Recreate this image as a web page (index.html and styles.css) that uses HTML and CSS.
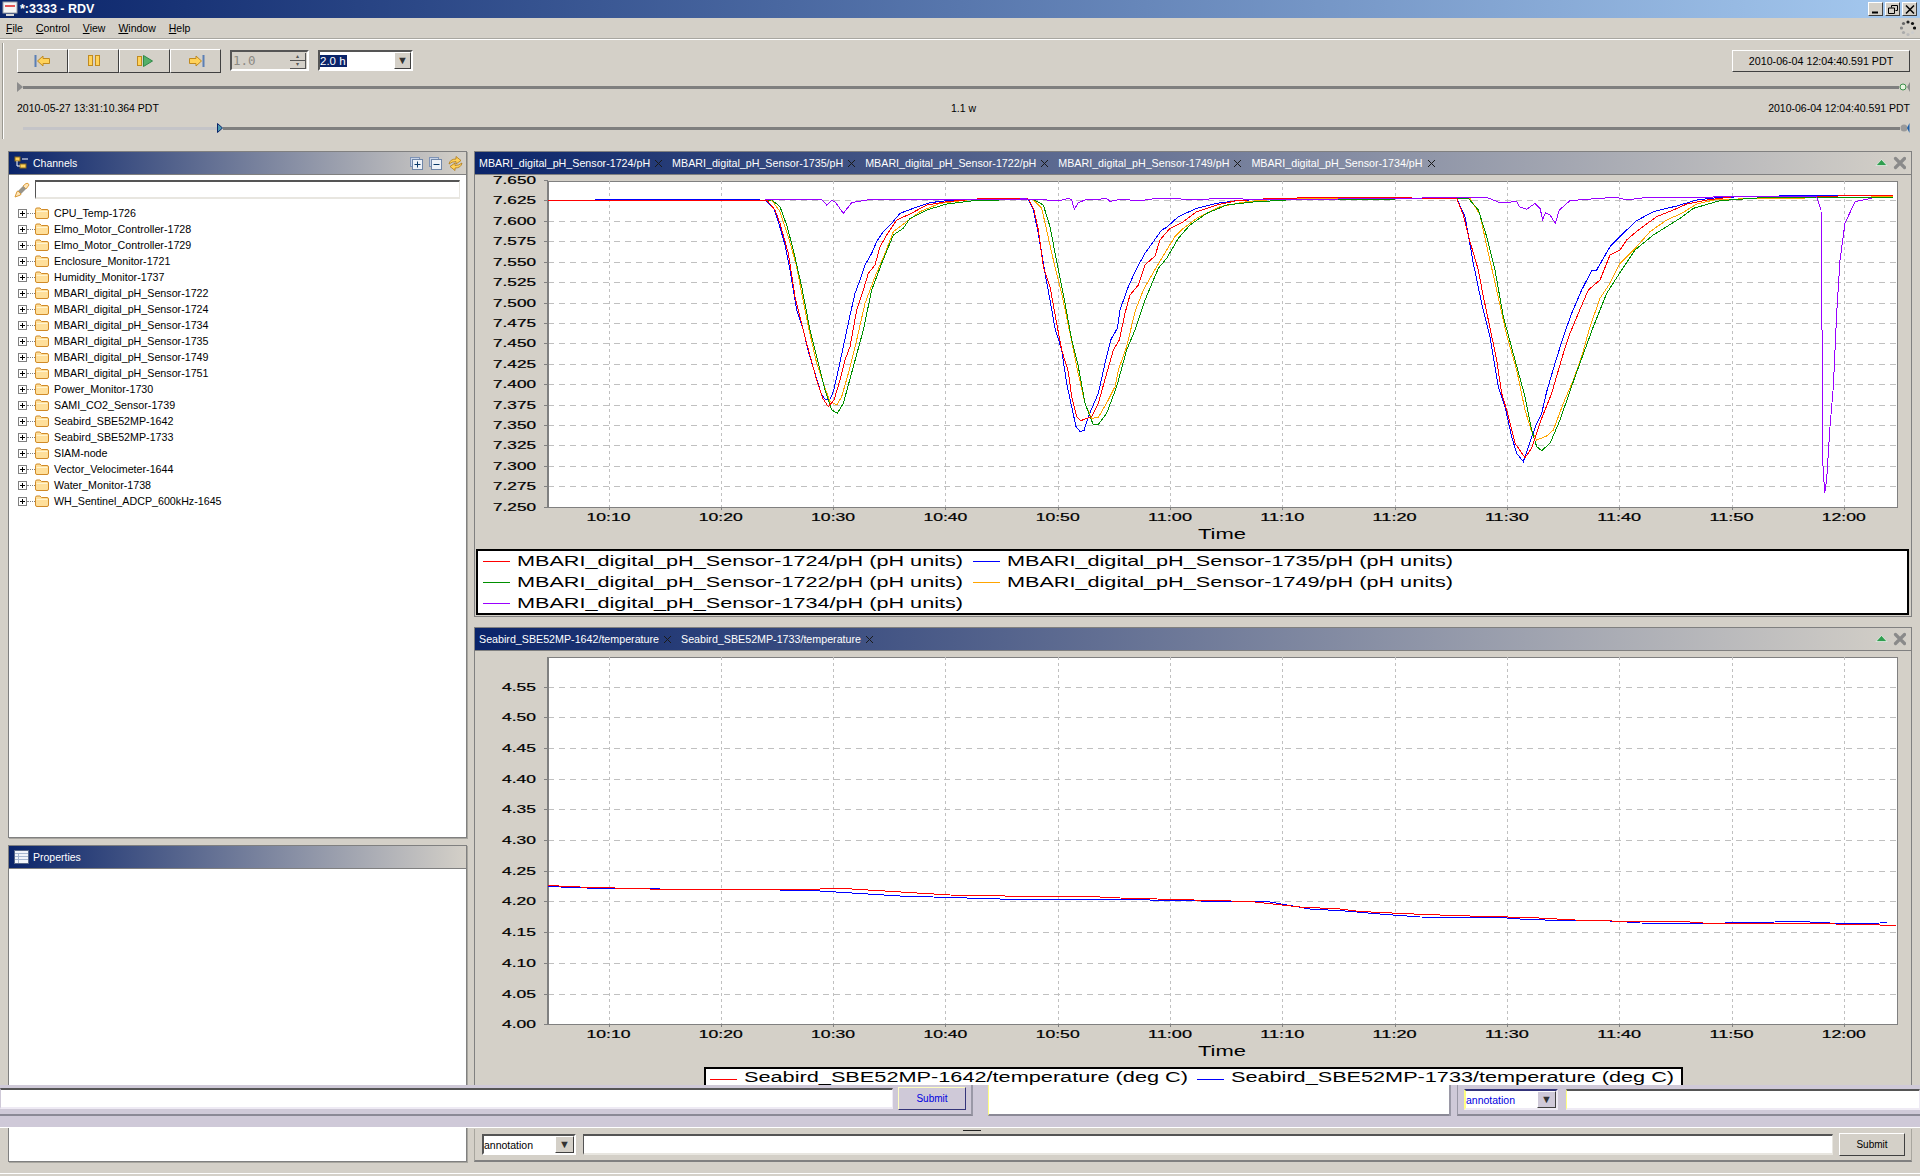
FILE: index.html
```html
<!DOCTYPE html>
<html lang="en">

<head>
    <meta charset="UTF-8">
    <title>*:3333 - RDV</title>
    <link rel="stylesheet" href="styles.css">
</head>

<body>
    <svg class="defs">
        <symbol id="folder" viewBox="0 0 14 12">
            <path d="M.5 2.500Q.5 1 2 1H5L6.500 2.500H12Q13.500 2.500 13.500 4V10Q13.500 11.500 12 11.500H2Q.5 11.500 .5 10Z" fill="#ffdf9a" stroke="#d08a28"/>
            <path d="M1.500 4.500H12.500" stroke="#fff3d0"/>
        </symbol>
        <symbol id="close" viewBox="0 0 9 9">
            <path d="M1 1L8 8M8 1L1 8" stroke="#1a1a1a" fill="none"/>
        </symbol>
        <symbol id="panel-actions" viewBox="0 0 36 14">
            <path d="M6 9.500H17L11.500 3.500Z" fill="#2f9e4f" stroke="#fff" stroke-width=".6"/>
            <path d="M25.500 2.500L34.500 11.500M34.500 2.500L25.500 11.500" stroke="#8a8a8a" stroke-width="3.200" stroke-linecap="round" fill="none"/>
        </symbol>
    </svg>

    <div class="app">
        <div class="titlebar">
            <svg class="app-icon" width="16" height="16" viewBox="0 0 16 16">
                <rect x="1" y="1" width="14" height="11" fill="#f4f4f4" stroke="#9aa0a8"/>
                <path d="M3 5H13" stroke="#e02020" stroke-width="1.500"/>
                <path d="M4 14H12" stroke="#d8d8d8" stroke-width="2"/>
            </svg>
            <span class="app-title">*:3333 - RDV</span>
            <div class="win-buttons">
                <button class="win-btn"><svg width="10" height="9" viewBox="0 0 10 9"><path d="M1 7.500H7" stroke="#000" stroke-width="2"/></svg></button>
                <button class="win-btn"><svg width="10" height="9" viewBox="0 0 10 9"><path d="M3.500 2.500V.5H9.500V5.500H7.500M.5 3H6.500V8.500H.5Z" stroke="#000" fill="none"/></svg></button>
                <button class="win-btn"><svg width="10" height="9" viewBox="0 0 10 9"><path d="M1 .5L9 8.500M9 .5L1 8.500" stroke="#000" stroke-width="1.500"/></svg></button>
            </div>
        </div>

        <div class="menubar">
            <span class="menu-item"><u>F</u>ile</span>
            <span class="menu-item"><u>C</u>ontrol</span>
            <span class="menu-item"><u>V</u>iew</span>
            <span class="menu-item"><u>W</u>indow</span>
            <span class="menu-item"><u>H</u>elp</span>
            <svg class="busy" width="16" height="16" viewBox="0 0 16 16">
                <circle cx="8" cy="2" r="1.600" fill="#222"/>
                <circle cx="12.500" cy="3.500" r="1.600" fill="#111"/>
                <circle cx="14.500" cy="8" r="1.600" fill="#111"/>
                <circle cx="12.500" cy="12.500" r="1.600" fill="#ccc"/>
                <circle cx="8" cy="14.500" r="1.600" fill="#bbb"/>
                <circle cx="3.500" cy="12.500" r="1.600" fill="#aaa"/>
                <circle cx="1.500" cy="8" r="1.600" fill="#888"/>
                <circle cx="3.500" cy="3.500" r="1.600" fill="#666"/>
            </svg>
        </div>

        <div class="toolbar">
            <div class="toolbar-inner">
                <div class="controls">
                    <div class="transport">
                        <button class="transport-btn">
                            <svg width="18" height="14" viewBox="0 0 18 14">
                                <path d="M1.500 1V13" stroke="#5b7fb5" stroke-width="2"/>
                                <path d="M3.500 7L9 2V4.500H15.500V9.500H9V12Z" fill="#ffd25a" stroke="#c08a20"/>
                            </svg>
                        </button>
                        <button class="transport-btn">
                            <svg width="14" height="14" viewBox="0 0 14 14">
                                <rect x="1.500" y="1.500" width="4" height="10" fill="#ffd25a" stroke="#c08a20"/>
                                <rect x="8.500" y="1.500" width="4" height="10" fill="#ffd25a" stroke="#c08a20"/>
                            </svg>
                        </button>
                        <button class="transport-btn">
                            <svg width="18" height="14" viewBox="0 0 18 14">
                                <rect x="1.500" y="2.500" width="4" height="9" fill="#ffd25a" stroke="#c08a20"/>
                                <path d="M7.500 1.500L16.500 7L7.500 12.500Z" fill="#55b06a" stroke="#2f8a48"/>
                            </svg>
                        </button>
                        <button class="transport-btn">
                            <svg width="18" height="14" viewBox="0 0 18 14">
                                <path d="M14.500 7L9 2V4.500H2.500V9.500H9V12Z" fill="#ffd25a" stroke="#c08a20"/>
                                <path d="M16.500 1V13" stroke="#5b7fb5" stroke-width="2"/>
                            </svg>
                        </button>
                    </div>
                    <div class="spinner">
                        <span class="spinner-value">1.0</span>
                        <div class="spinner-arrows">
                            <span class="spin-btn">&#9652;</span>
                            <span class="spin-btn">&#9662;</span>
                        </div>
                    </div>
                    <div class="combo range-combo">
                        <span class="combo-value"><span class="selected">2.0 h</span></span>
                        <span class="combo-btn">&#9660;</span>
                    </div>
                    <button class="end-time">2010-06-04 12:04:40.591 PDT</button>
                </div>

                <div class="slider">
                    <svg width="6" height="10" viewBox="0 0 6 10"><path d="M0 0L6 5L0 10Z" fill="#8c8c8c"/></svg>
                    <div class="track"></div>
                    <svg width="11" height="10" viewBox="0 0 11 10">
                        <circle cx="4" cy="5" r="3" fill="#e8f4e0" stroke="#3b8f4a"/>
                        <path d="M11 0V10L8 5Z" fill="#8c8c8c"/>
                    </svg>
                </div>

                <div class="time-labels">
                    <span>2010-05-27 13:31:10.364 PDT</span>
                    <span>1.1 w</span>
                    <span>2010-06-04 12:04:40.591 PDT</span>
                </div>

                <div class="slider zoom-slider">
                    <div class="track track-off"></div>
                    <svg width="6" height="10" viewBox="0 0 6 10"><path d="M.5 .5L5.500 5L.5 9.500Z" fill="#4b9ab0" stroke="#0a246a"/></svg>
                    <div class="track"></div>
                    <svg width="10" height="10" viewBox="0 0 10 10">
                        <circle cx="4" cy="5" r="3.500" fill="#9a9a9a"/>
                        <path d="M9.500 0V10L7 5Z" fill="#1f5fa8"/>
                    </svg>
                </div>
            </div>
        </div>

        <div class="workarea">
            <div class="side">
                <div class="panel channels">
                    <div class="panel-title">
                        <svg class="title-icon" width="15" height="14" viewBox="0 0 15 14">
                            <rect x="1" y="1" width="5" height="4" fill="#ffd25a" stroke="#8a6a20"/>
                            <rect x="6" y="8" width="6" height="4" fill="#ffd25a" stroke="#8a6a20"/>
                            <path d="M3 5V10H6M8 3H14" stroke="#fff" fill="none"/>
                        </svg>
                        <span class="title-text">Channels</span>
                        <div class="title-tools">
                            <svg width="13" height="13" viewBox="0 0 13 13">
                                <rect x=".5" y=".5" width="9" height="9" fill="#c8d4e8" stroke="#7f93b5"/>
                                <rect x="2.500" y="2.500" width="10" height="10" fill="#eef2f8" stroke="#6f86a8"/>
                                <path d="M7.500 4.500V10.500M4.500 7.500H10.500" stroke="#0a3a6a"/>
                            </svg>
                            <svg width="13" height="13" viewBox="0 0 13 13">
                                <rect x=".5" y=".5" width="9" height="9" fill="#c8d4e8" stroke="#7f93b5"/>
                                <rect x="2.500" y="2.500" width="10" height="10" fill="#eef2f8" stroke="#6f86a8"/>
                                <path d="M4.500 7.500H10.500" stroke="#0a3a6a"/>
                            </svg>
                            <svg width="15" height="15" viewBox="0 0 15 15">
                                <path d="M1 8Q2 3 8 3V.5L13 4.500L8 8V5.500Q4 5.500 1 8Z" fill="#ffd25a" stroke="#b07a18" stroke-width=".8"/>
                                <path d="M14 7Q13 12 7 12V14.500L2 10.500L7 7V9.500Q11 9.500 14 7Z" fill="#ffd25a" stroke="#b07a18" stroke-width=".8"/>
                            </svg>
                        </div>
                    </div>
                    <div class="filter-row">
                        <svg width="16" height="16" viewBox="0 0 16 16">
                            <path d="M9 4L12 1.500Q14.500 .5 15 3L12 7Z" fill="#ffe6b8" stroke="#e0a040"/>
                            <path d="M4 9L9 4L12 7L7 12Z" fill="#98948a"/>
                            <path d="M1 15L3 9.500L4 9L7 12L6.500 13Z" fill="#ffe6b8" stroke="#d89a3a"/>
                        </svg>
                        <input class="field filter-input">
                    </div>
                    <ul class="tree">
                        <li class="tree-row"><span class="expander"></span><span class="tree-dots"></span><svg class="folder"><use href="#folder"/></svg>CPU_Temp-1726</li>
                        <li class="tree-row"><span class="expander"></span><span class="tree-dots"></span><svg class="folder"><use href="#folder"/></svg>Elmo_Motor_Controller-1728</li>
                        <li class="tree-row"><span class="expander"></span><span class="tree-dots"></span><svg class="folder"><use href="#folder"/></svg>Elmo_Motor_Controller-1729</li>
                        <li class="tree-row"><span class="expander"></span><span class="tree-dots"></span><svg class="folder"><use href="#folder"/></svg>Enclosure_Monitor-1721</li>
                        <li class="tree-row"><span class="expander"></span><span class="tree-dots"></span><svg class="folder"><use href="#folder"/></svg>Humidity_Monitor-1737</li>
                        <li class="tree-row"><span class="expander"></span><span class="tree-dots"></span><svg class="folder"><use href="#folder"/></svg>MBARI_digital_pH_Sensor-1722</li>
                        <li class="tree-row"><span class="expander"></span><span class="tree-dots"></span><svg class="folder"><use href="#folder"/></svg>MBARI_digital_pH_Sensor-1724</li>
                        <li class="tree-row"><span class="expander"></span><span class="tree-dots"></span><svg class="folder"><use href="#folder"/></svg>MBARI_digital_pH_Sensor-1734</li>
                        <li class="tree-row"><span class="expander"></span><span class="tree-dots"></span><svg class="folder"><use href="#folder"/></svg>MBARI_digital_pH_Sensor-1735</li>
                        <li class="tree-row"><span class="expander"></span><span class="tree-dots"></span><svg class="folder"><use href="#folder"/></svg>MBARI_digital_pH_Sensor-1749</li>
                        <li class="tree-row"><span class="expander"></span><span class="tree-dots"></span><svg class="folder"><use href="#folder"/></svg>MBARI_digital_pH_Sensor-1751</li>
                        <li class="tree-row"><span class="expander"></span><span class="tree-dots"></span><svg class="folder"><use href="#folder"/></svg>Power_Monitor-1730</li>
                        <li class="tree-row"><span class="expander"></span><span class="tree-dots"></span><svg class="folder"><use href="#folder"/></svg>SAMI_CO2_Sensor-1739</li>
                        <li class="tree-row"><span class="expander"></span><span class="tree-dots"></span><svg class="folder"><use href="#folder"/></svg>Seabird_SBE52MP-1642</li>
                        <li class="tree-row"><span class="expander"></span><span class="tree-dots"></span><svg class="folder"><use href="#folder"/></svg>Seabird_SBE52MP-1733</li>
                        <li class="tree-row"><span class="expander"></span><span class="tree-dots"></span><svg class="folder"><use href="#folder"/></svg>SIAM-node</li>
                        <li class="tree-row"><span class="expander"></span><span class="tree-dots"></span><svg class="folder"><use href="#folder"/></svg>Vector_Velocimeter-1644</li>
                        <li class="tree-row"><span class="expander"></span><span class="tree-dots"></span><svg class="folder"><use href="#folder"/></svg>Water_Monitor-1738</li>
                        <li class="tree-row"><span class="expander"></span><span class="tree-dots"></span><svg class="folder"><use href="#folder"/></svg>WH_Sentinel_ADCP_600kHz-1645</li>
                    </ul>
                </div>

                <div class="panel properties">
                    <div class="panel-title">
                        <svg class="title-icon" width="15" height="14" viewBox="0 0 15 14">
                            <rect x=".5" y=".5" width="14" height="13" fill="#f4f6fa" stroke="#5a6a8a"/>
                            <path d="M1 3.500H14M1 6.500H14M1 9.500H14M4.500 3.500V13" stroke="#a8b8d0"/>
                        </svg>
                        <span class="title-text">Properties</span>
                    </div>
                </div>
            </div>

            <div class="main">
                <div class="panel chart-panel chart-ph">
                    <div class="panel-title">
                        <div class="tabs">
                            <span class="tab">MBARI_digital_pH_Sensor-1724/pH<svg class="tab-close"><use href="#close"/></svg></span>
                            <span class="tab">MBARI_digital_pH_Sensor-1735/pH<svg class="tab-close"><use href="#close"/></svg></span>
                            <span class="tab">MBARI_digital_pH_Sensor-1722/pH<svg class="tab-close"><use href="#close"/></svg></span>
                            <span class="tab">MBARI_digital_pH_Sensor-1749/pH<svg class="tab-close"><use href="#close"/></svg></span>
                            <span class="tab">MBARI_digital_pH_Sensor-1734/pH<svg class="tab-close"><use href="#close"/></svg></span>
                        </div>
                        <svg class="panel-actions"><use href="#panel-actions"/></svg>
                    </div>
                    <svg id="ph-chart" class="chart" width="1436" height="441" viewBox="475 175 1436 441"></svg>
                </div>

                <div class="panel chart-panel chart-temp">
                    <div class="panel-title">
                        <div class="tabs">
                            <span class="tab">Seabird_SBE52MP-1642/temperature<svg class="tab-close"><use href="#close"/></svg></span>
                            <span class="tab">Seabird_SBE52MP-1733/temperature<svg class="tab-close"><use href="#close"/></svg></span>
                        </div>
                        <svg class="panel-actions"><use href="#panel-actions"/></svg>
                    </div>
                    <svg id="temp-chart" class="chart" width="1436" height="475" viewBox="475 651 1436 475"></svg>
                </div>

                <div class="annotation-bar">
                    <div class="combo annotation-combo">
                        <span class="combo-value">annotation</span>
                        <span class="combo-btn">&#9660;</span>
                    </div>
                    <input class="field annotation-input">
                    <button class="submit">Submit</button>
                </div>
            </div>
        </div>

        <div class="statusbar"></div>

        <!-- stale repaint band that sits over the bottom of the window -->
        <div class="ghost">
            <div class="ghost-left">
                <input class="field ghost-field">
                <button class="submit ghost-submit">Submit</button>
            </div>
            <div class="ghost-mid"></div>
            <div class="ghost-right">
                <div class="combo annotation-combo ghost-combo">
                    <span class="combo-value">annotation</span>
                    <span class="combo-btn">&#9660;</span>
                </div>
                <input class="field ghost-field">
            </div>
        </div>
        <div class="sash-grip"></div>
    </div>

    <script src="chart.js"></script>
</body>

</html>
```

FILE: styles.css
```css
*{
    margin: 0;
    padding: 0;
    box-sizing: border-box;
}
body{
    background-color: #d4d0c8;
    font: 10.5px "Liberation Sans", Arial, sans-serif;
    color: #000;
    overflow: hidden;
}
.defs{
    display: none;
}
.app{
    position: relative;
    width: 1920px;
    height: 1176px;
    display: flex;
    flex-direction: column;
    overflow: hidden;
}

/* window chrome */
.titlebar{
    height: 18px;
    display: flex;
    align-items: center;
    padding: 0 3px 0 2px;
    background: linear-gradient(to right, #0a246a, #a6caf0);
}
.app-title{
    margin-left: 2px;
    color: #fff;
    font-weight: bold;
    font-size: 12.5px;
}
.win-buttons{
    margin-left: auto;
    display: flex;
    gap: 2px;
}
.win-btn{
    width: 15px;
    height: 14px;
    display: flex;
    align-items: center;
    justify-content: center;
    background: #d4d0c8;
    border: 1px solid;
    border-color: #fff #404040 #404040 #fff;
}
.menubar{
    height: 21px;
    display: flex;
    align-items: center;
    padding: 0 4px 0 6px;
    border-bottom: 1px solid #a8a6a0;
}
.menu-item{
    margin-right: 13px;
}
.busy{
    margin-left: auto;
}

/* time controls */
.toolbar{
    height: 112px;
    border-top: 1px solid #fff;
    padding: 3px 0 0 3px;
}
.toolbar-inner{
    height: 96px;
    border-left: 1px solid #fff;
    box-shadow: -1px 0 0 #9a9890;
    padding: 6px 10px 0 13px;
}
.controls{
    height: 24px;
    display: flex;
    align-items: flex-start;
}
.transport{
    display: flex;
}
.transport-btn{
    width: 51px;
    height: 24px;
    display: flex;
    align-items: center;
    justify-content: center;
    background: #d4d0c8;
    border: 1px solid;
    border-color: #fff #404040 #404040 #fff;
}
.spinner{
    width: 79px;
    height: 21px;
    margin: 1px 0 0 9px;
    display: flex;
    justify-content: space-between;
    align-items: center;
    border: 2px solid;
    border-color: #555 #fff #fff #555;
}
.spinner-value{
    padding-left: 1px;
    color: #8c8a84;
    font: 12.5px "DejaVu Sans Mono", monospace;
}
.spinner-arrows{
    width: 16px;
    margin-right: 1px;
    display: flex;
    flex-direction: column;
}
.spin-btn{
    height: 8px;
    border-bottom: 1px solid #555;
    border-right: 1px solid #555;
    color: #555;
    font-size: 6px;
    line-height: 7px;
    text-align: center;
}
.combo{
    display: flex;
    align-items: center;
    background: #fff;
    border: 2px solid;
    border-color: #555 #fff #fff #555;
}
.range-combo{
    width: 95px;
    height: 21px;
    margin: 1px 0 0 9px;
    font-size: 11.5px;
}
.combo-value{
    flex: 1;
    white-space: nowrap;
}
.selected{
    display: inline-block;
    padding-right: 1px;
    background: #0a246a;
    color: #fff;
}
.combo-btn{
    width: 17px;
    height: 100%;
    background: #d4d0c8;
    border: 1px solid;
    border-color: #fff #404040 #404040 #fff;
    color: #333;
    font-size: 11px;
    line-height: 15px;
    text-align: center;
}
.end-time{
    width: 178px;
    height: 22px;
    margin: 1px 0 0 auto;
    background: #d4d0c8;
    border: 1px solid;
    border-color: #fff #404040 #404040 #fff;
    font: inherit;
    font-size: 10.7px;
}
.slider{
    height: 10px;
    margin-top: 9px;
    display: flex;
    align-items: center;
}
.track{
    flex: 1;
    height: 3px;
    background: #7f7f7f;
}
.track-off{
    flex: none;
    width: 194px;
    background: #c4c4c8;
}
.zoom-slider{
    margin-top: 8px;
    padding-left: 6px;
}
.time-labels{
    height: 14px;
    margin-top: 9px;
    display: flex;
    justify-content: space-between;
    align-items: center;
}

/* panels */
.workarea{
    height: 1011px;
    display: flex;
    gap: 7px;
    padding-left: 8px;
}
.side{
    width: 459px;
    display: flex;
    flex-direction: column;
    gap: 7px;
}
.main{
    width: 1438px;
    display: flex;
    flex-direction: column;
}
.panel{
    display: flex;
    flex-direction: column;
    background: #fff;
    border: 1px solid #808080;
    box-shadow: 1px 1px 0 #a8a69f;
}
.channels{
    height: 687px;
}
.properties{
    flex: 1;
}
.panel-title{
    flex: none;
    height: 23px;
    display: flex;
    align-items: center;
    padding: 0 5px;
    border-bottom: 1px solid #808080;
    background: linear-gradient(to right, #0a246a, #d4d0c8);
}
.title-icon{
    flex: none;
}
.title-text{
    margin-left: 4px;
    color: #fff;
}
.title-tools{
    margin: 0 -2px 0 auto;
    display: flex;
    align-items: center;
    gap: 6px;
}
.field{
    display: block;
    background: #fff;
    border: 2px solid;
    border-color: #555 #e8e6e0 #e8e6e0 #555;
    border-left-width: 1px;
    border-right-width: 1px;
}
.filter-row{
    display: flex;
    align-items: center;
    gap: 5px;
    padding: 5px 6px 0 5px;
}
.filter-input{
    flex: 1;
    height: 19px;
}
.tree{
    margin-top: 6px;
    list-style: none;
    font-size: 10.7px;
}
.tree-row{
    height: 16px;
    display: flex;
    align-items: center;
    padding-left: 9px;
    white-space: nowrap;
}
.expander{
    width: 9px;
    height: 9px;
    border: 1px solid #808080;
    background:
        linear-gradient(#000, #000) center / 5px 1px no-repeat,
        linear-gradient(#000, #000) center / 1px 5px no-repeat;
}
.tree-dots{
    width: 8px;
    border-top: 1px dotted #808080;
}
.folder{
    width: 14px;
    height: 12px;
    margin-right: 5px;
}

/* charts */
.chart-panel{
    background: #d4d0c8;
    box-shadow: none;
}
.chart-ph{
    height: 466px;
}
.chart-temp{
    height: 500px;
    margin-top: 10px;
    overflow: hidden;
}
.chart-panel .panel-title{
    padding-left: 4px;
}
.tabs{
    display: flex;
    gap: 9px;
}
.tab{
    display: flex;
    align-items: center;
    gap: 4px;
    color: #fff;
    font-size: 10.7px;
    white-space: nowrap;
}
.tab-close{
    width: 9px;
    height: 9px;
}
.panel-actions{
    flex: none;
    width: 36px;
    height: 14px;
    margin-left: auto;
}
.chart{
    display: block;
}
.plot-bg{
    fill: #fff;
    stroke: #808080;
}
.plot-edge{
    stroke: #808080;
    stroke-width: 2;
}
.grid-h{
    stroke: #c0c0c0;
    stroke-dasharray: 6 5;
}
.grid-v{
    stroke: #c0c0c0;
    stroke-dasharray: 3 3;
}
.tick{
    stroke: #808080;
}
.series{
    fill: none;
    stroke-width: 1;
    shape-rendering: crispEdges;
}
.axis-label{
    font: 10.5px "Liberation Sans", Arial, sans-serif;
    stroke: #000;
    stroke-width: .2;
}
.axis-title,
.legend-label{
    font: 14px "Liberation Sans", Arial, sans-serif;
}
.legend-box{
    fill: #fff;
    stroke: #000;
    stroke-width: 2;
    shape-rendering: crispEdges;
}

/* annotation form */
.annotation-bar{
    height: 33px;
    margin-top: 2px;
    display: flex;
    align-items: flex-start;
    padding: 5px 6px 0 7px;
    border: 1px solid #a8a69f;
    border-top: none;
    border-bottom: 2px solid #808080;
}
.annotation-combo{
    width: 94px;
    height: 21px;
    flex: none;
}
.annotation-combo .combo-btn{
    width: 19px;
}
.annotation-input{
    flex: 1;
    height: 21px;
    margin: 0 6px 0 7px;
}
.submit{
    width: 66px;
    height: 23px;
    margin-top: -1px;
    background: #d4d0c8;
    border: 1px solid;
    border-color: #fff #404040 #404040 #fff;
    font: inherit;
    font-size: 10px;
}
.statusbar{
    height: 3px;
    margin-top: 11px;
    border-top: 1px solid #fff;
}

/* stale repaint band */
.ghost{
    position: absolute;
    top: 1085px;
    left: 0;
    right: 0;
    height: 43px;
    display: flex;
    background: #cfc9d8;
    border-bottom: 1px solid #fff;
}
.ghost-left{
    width: 973px;
    height: 31px;
    display: flex;
    align-items: flex-start;
    gap: 5px;
    padding: 3px 5px 0 0;
    border-bottom: 2px solid #8b8996;
    border-right: 2px solid #9a98a6;
}
.ghost-field{
    flex: 1;
    height: 21px;
    border-color: #555 #eeeaf4 #eeeaf4 #cfc9d8;
}
.ghost-right .ghost-field{
    border-left-color: #ffff80;
}
.ghost-submit{
    width: 68px;
    margin-top: -1px;
    background: #cfc9d8;
    border-color: #ffffc0 #34347a #34347a #ffffc0;
    color: #0000e0;
}
.ghost-mid{
    width: 461px;
    height: 31px;
    margin-left: 15px;
    background: #fff;
    border-left: 1px solid #ffff80;
    border-bottom: 2px solid #8b8996;
    box-shadow: 2px 0 0 #9a98a6;
}
.ghost-right{
    flex: 1;
    height: 31px;
    margin-left: 8px;
    display: flex;
    align-items: flex-start;
    gap: 8px;
    padding: 4px 0 0 6px;
    border-left: 1px solid #9a98a6;
    border-bottom: 2px solid #8b8996;
}
.ghost-combo{
    border-color: #34347a #eeeaf4 #eeeaf4 #ffff80;
    color: #0000e0;
}
.ghost-combo .combo-btn{
    background: #cfc9d8;
}
.sash-grip{
    position: absolute;
    top: 1130px;
    left: 963px;
    width: 18px;
    height: 1px;
    background: #222;
}
```

FILE: chart.js
```js
const NS = 'http://www.w3.org/2000/svg'
const RED = '#ff0000', BLUE = '#0000ff', GREEN = '#009000', ORANGE = '#ffa500', PURPLE = '#9a00ff'

// time axis: both charts show the same two hours
const TIMES = ['10:10','10:20','10:30','10:40','10:50','11:00','11:10','11:20','11:30','11:40','11:50','12:00']
const timeX = (i) => 608.5 + 112.3 * i

// each trace was read off in three stretches, [x, y] at 3x from an origin
const stretch = (ox, oy, pts) => pts.map(([x, y]) => [ox + x / 3, oy + y / 3])
const DIP1 = 760, DIP2 = 1020, DIP3 = 1400
const trace = (a, b, c) => [...stretch(DIP1, 190, a), ...stretch(DIP2, 190, b), ...stretch(DIP3, 180, c)]

const BLUE_PH = [[592,199],[682,199.5],[760,200]].concat(trace(
    [[15,30],[40,52],[55,95],[75,165],[90,240],[110,360],[130,420],[145,485],[165,550],[185,615],[195,627],[208,632],[220,605],[235,540],[250,470],[268,385],[285,310],[300,270],[315,225],[335,190],[350,155],[370,125],[395,100],[420,70],[460,55],[510,38],[560,32],[650,28],[800,26]],
    [[25,27],[40,60],[55,130],[75,250],[90,330],[105,415],[125,480],[140,580],[155,650],[168,710],[180,724],[192,722],[205,680],[235,610],[255,520],[272,450],[292,415],[300,360],[325,290],[350,235],[375,190],[400,155],[425,120],[440,112],[475,80],[530,55],[590,40],[650,32],[780,25]],
    [[170,55],[195,110],[220,250],[245,370],[270,470],[295,620],[315,680],[335,770],[350,820],[370,845],[385,800],[410,730],[425,700],[440,635],[465,550],[490,470],[515,400],[545,330],[575,272],[590,270],[630,200],[680,150],[710,122],[760,95],[830,78],[890,60],[960,52],[1180,47],[1480,48]]
))
const RED_PH = [[548,200],[760,200]].concat(trace(
    [[20,30],[45,60],[60,100],[85,190],[105,320],[120,380],[140,460],[170,570],[188,625],[205,650],[222,630],[240,570],[255,510],[270,470],[290,360],[310,300],[325,250],[345,225],[360,170],[380,135],[410,90],[450,72],[500,45],[560,35],[650,27],[800,26]],
    [[25,27],[42,60],[55,120],[70,230],[90,290],[110,400],[125,480],[145,545],[155,620],[170,680],[182,692],[215,680],[235,640],[260,550],[280,480],[298,450],[315,370],[330,315],[355,285],[375,225],[405,198],[420,150],[450,115],[490,95],[530,65],[590,45],[650,32],[730,27],[900,22]],
    [[170,55],[190,105],[210,185],[235,270],[250,350],[265,420],[290,540],[305,640],[320,690],[345,790],[375,833],[395,805],[425,715],[455,640],[490,520],[510,460],[535,400],[565,330],[600,300],[630,225],[660,210],[680,180],[715,150],[770,110],[820,90],[860,72],[920,60],[1000,50],[1480,47]]
))
const ORANGE_PH = [[760,200]].concat(trace(
    [[35,30],[60,65],[85,140],[110,230],[125,310],[145,410],[170,520],[190,580],[210,635],[230,645],[245,620],[265,550],[290,450],[315,340],[345,260],[375,190],[400,125],[440,95],[480,65],[540,40],[620,30],[800,26]],
    [[40,30],[65,55],[80,120],[100,210],[125,310],[150,430],[170,530],[195,640],[215,685],[235,682],[265,630],[285,590],[295,540],[320,470],[345,365],[370,300],[410,230],[440,180],[465,140],[490,115],[530,85],[600,50],[680,35],[800,25]],
    [[210,55],[240,105],[265,220],[290,330],[320,465],[350,570],[375,690],[395,755],[410,780],[440,768],[460,750],[490,670],[520,600],[545,530],[570,440],[600,355],[630,310],[660,250],[710,200],[750,155],[800,120],[845,100],[890,72],[950,58],[1480,50]]
))
const GREEN_PH = [[682,201],[760,200.5]].concat(trace(
    [[35,30],[60,50],[80,105],[100,180],[125,290],[150,420],[175,520],[195,600],[215,660],[232,670],[250,640],[280,530],[310,420],[335,300],[365,220],[400,135],[430,115],[450,85],[500,60],[560,42],[640,32],[720,30]],
    [[40,28],[70,45],[90,110],[115,240],[135,340],[155,450],[175,530],[195,640],[220,705],[235,703],[260,670],[290,590],[320,480],[345,420],[375,330],[415,235],[440,205],[475,145],[510,105],[560,70],[620,45],[700,36],[800,30]],
    [[205,55],[235,90],[260,170],[285,270],[310,410],[345,540],[375,650],[395,750],[410,800],[425,812],[450,790],[480,720],[525,590],[580,440],[620,340],[665,270],[705,210],[760,165],[840,115],[880,85],[960,62],[1100,52],[1480,52]]
))
const PURPLE_PH = trace(
    [[15,28],[185,28],[200,45],[215,32],[225,35],[250,70],[275,38],[320,30],[800,28]],
    [[0,26],[120,32],[145,25],[155,30],[163,58],[175,38],[195,30],[260,26],[270,34],[300,28],[360,32],[410,25],[520,28],[660,25],[680,30]],
    [[0,55],[205,52],[260,52],[300,68],[350,65],[358,80],[380,88],[405,70],[420,85],[428,118],[437,98],[450,105],[466,130],[478,90],[510,62],[600,55],[650,52],[680,60],[740,52],[880,52],[1000,50],[1250,50],[1263,90],[1266,450],[1268,840],[1272,905],[1274,938],[1280,900],[1290,740],[1300,620],[1310,400],[1320,240],[1335,130],[1365,65],[1415,55]]
)

const BLUE_TEMP = [[548,886.5],[600,888.5],[780,890],[820,891],[900,896],[1000,899],[1100,899],[1200,901],[1270,902],[1310,909],[1345,911],[1380,914],[1420,917],[1500,917.5],[1520,919],[1545,920],[1590,920],[1620,921.5],[1640,923],[1700,923.5],[1750,922.5],[1800,921.5],[1840,923.5],[1880,923],[1887,922.5]]
const RED_TEMP = [[548,885.5],[580,887],[650,889],[820,889],[835,888],[860,889.5],[950,895],[1060,897],[1090,896.5],[1120,898],[1250,901.5],[1300,907],[1340,909],[1360,911.5],[1420,914.3],[1440,915],[1485,916.5],[1530,917.5],[1575,920],[1630,921.5],[1690,922],[1710,923.5],[1800,923.5],[1835,924],[1880,925],[1896,925.5]]

function el(parent, tag, attrs, text){
    const node = document.createElementNS(NS, tag)
    for(let key in attrs){
        node.setAttribute(key, attrs[key])
    }
    if(text) node.textContent = text
    parent.appendChild(node)
    return node
}

// chart text is drawn wide, so each label gets its measured width
function label(svg, cls, x, y, text, width, anchor){
    el(svg, 'text', {class: cls, x, y, textLength: width, lengthAdjust: 'spacingAndGlyphs', 'text-anchor': anchor || 'start'}, text)
}

function drawPlot(svg, plot){
    const {left, right, top, bottom} = plot
    el(svg, 'rect', {class: 'plot-bg', x: left + .5, y: top + .5, width: right - left, height: bottom - top})

    plot.ticks.forEach((tick) => {
        const y = Math.round(tick.y) + .5
        if(tick.grid) el(svg, 'line', {class: 'grid-h', x1: left, x2: right, y1: y, y2: y})
        el(svg, 'line', {class: 'tick', x1: left - 4, x2: left, y1: y, y2: y})
        label(svg, 'axis-label', 536, tick.y + 4, tick.text, plot.labelWidth, 'end')
    })
    TIMES.forEach((time, i) => {
        const x = Math.round(timeX(i)) + .5
        el(svg, 'line', {class: 'grid-v', x1: x, x2: x, y1: top, y2: bottom})
        el(svg, 'line', {class: 'tick', x1: x, x2: x, y1: bottom, y2: bottom + 3})
        label(svg, 'axis-label', timeX(i), bottom + 14, time, 44, 'middle')
    })
    el(svg, 'line', {class: 'plot-edge', x1: left, x2: left, y1: top, y2: bottom + 1})
    label(svg, 'axis-title', 1222, bottom + 32, 'Time', 48, 'middle')

    plot.series.forEach(([color, pts]) => {
        el(svg, 'polyline', {class: 'series', stroke: color, points: pts.map((p) => p.join(',')).join(' ')})
    })
}

function drawLegend(svg, box, items){
    el(svg, 'rect', {class: 'legend-box', x: box.x, y: box.y, width: box.width, height: box.height})
    items.forEach(([color, text, x, y, width]) => {
        el(svg, 'line', {stroke: color, x1: x - 34, x2: x - 7, y1: y + .5, y2: y + .5})
        label(svg, 'legend-label', x, y + box.drop, text, width)
    })
}

const phSvg = document.querySelector('#ph-chart')
const phTicks = []
for(let i = 0; i <= 16; i++){
    phTicks.push({y: 180 + i * 20.42, text: (7.65 - i * .025).toFixed(3), grid: i > 0 && i < 16})
}
drawPlot(phSvg, {
    left: 548, right: 1897, top: 181, bottom: 507, labelWidth: 43, ticks: phTicks,
    series: [[BLUE, BLUE_PH], [ORANGE, ORANGE_PH], [GREEN, GREEN_PH], [RED, RED_PH], [PURPLE, PURPLE_PH]]
})
drawLegend(phSvg, {x: 477, y: 550, width: 1431, height: 64, drop: 5}, [
    [RED, 'MBARI_digital_pH_Sensor-1724/pH (pH units)', 517, 561, 446],
    [BLUE, 'MBARI_digital_pH_Sensor-1735/pH (pH units)', 1007, 561, 446],
    [GREEN, 'MBARI_digital_pH_Sensor-1722/pH (pH units)', 517, 582, 446],
    [ORANGE, 'MBARI_digital_pH_Sensor-1749/pH (pH units)', 1007, 582, 446],
    [PURPLE, 'MBARI_digital_pH_Sensor-1734/pH (pH units)', 517, 603, 446]
])

const tempSvg = document.querySelector('#temp-chart')
const tempTicks = []
for(let i = 0; i <= 11; i++){
    tempTicks.push({y: 686.5 + i * 30.7, text: (4.55 - i * .05).toFixed(2), grid: i < 11})
}
drawPlot(tempSvg, {
    left: 548, right: 1897, top: 657, bottom: 1024, labelWidth: 34, ticks: tempTicks,
    series: [[BLUE, BLUE_TEMP], [RED, RED_TEMP]]
})
drawLegend(tempSvg, {x: 705, y: 1068, width: 977, height: 40, drop: 3}, [
    [RED, 'Seabird_SBE52MP-1642/temperature (deg C)', 744, 1079, 444],
    [BLUE, 'Seabird_SBE52MP-1733/temperature (deg C)', 1231, 1079, 443]
])
```
